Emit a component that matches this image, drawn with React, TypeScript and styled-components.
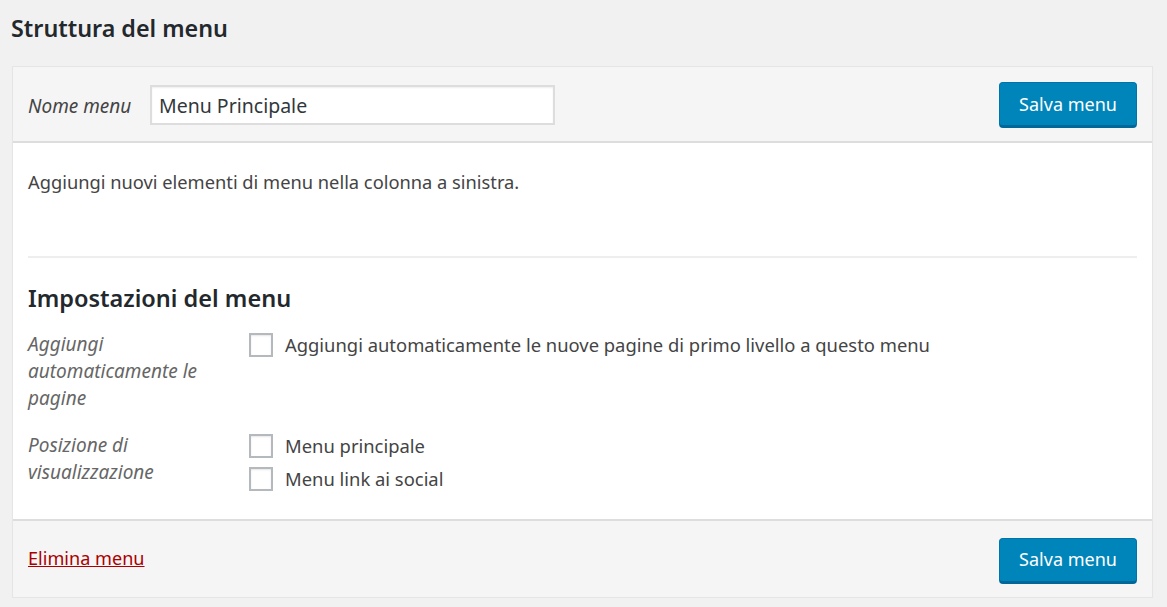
import React from "react";
import styled, { createGlobalStyle } from "styled-components";

const Global = createGlobalStyle`
  html, body { margin: 0; padding: 0; background: #f1f1f1; }
  body { font-family: "Noto Sans", "Open Sans", sans-serif; color: #444; }
`;

const Page = styled.div`
  padding: 12px 14px 0 12px;
  width: 1167px;
  box-sizing: border-box;
`;

const Title = styled.h2`
  margin: 0 0 0 -1px;
  font-size: 23.3px;
  line-height: 32px;
  font-weight: 600;
  color: #23282d;
`;

const Panel = styled.div`
  margin-top: 22px;
  background: #fff;
  border: 1px solid #e5e5e5;
  box-shadow: 0 1px 1px rgba(0, 0, 0, 0.04);
`;

const Bar = styled.div<{ $top?: boolean }>`
  box-sizing: border-box;
  display: flex;
  align-items: center;
  justify-content: space-between;
  background: #f5f5f5;
  padding: ${(p) => (p.$top ? "2px 15px 0" : "3px 15px 0")};
  height: ${(p) => (p.$top ? "76px" : "78px")};
  ${(p) => (p.$top ? "border-bottom: 2px solid #ddd;" : "border-top: 2px solid #ddd;")}
`;

const NameGroup = styled.div`
  display: flex;
  align-items: center;
`;

const NameLabel = styled.label`
  font-style: italic;
  font-size: 19px;
  color: #444;
  width: 122px;
  margin-top: 2px;
`;

const NameInput = styled.input`
  box-sizing: border-box;
  width: 405px;
  height: 40px;
  border: 2px solid #ddd;
  padding: 0 7px;
  font-family: inherit;
  font-size: 19.5px;
  color: #32373c;
  background: #fff;
  box-shadow: inset 0 1px 2px rgba(0, 0, 0, 0.07);
  outline: none;
`;

const Button = styled.button`
  box-sizing: border-box;
  width: 138px;
  height: 46px;
  background: #0085ba;
  border: 1px solid #0073aa;
  border-bottom: 3px solid #006799;
  border-radius: 4px;
  color: #fff;
  font-family: inherit;
  font-size: 18px;
  padding: 0 0 1px;
  cursor: pointer;
`;

const Body = styled.div`
  padding: 0 15px 10px;
`;

const Instructions = styled.p`
  margin: 0;
  padding: 26px 0 61px;
  font-size: 18.3px;
  line-height: 26px;
  border-bottom: 2px solid #eee;
`;

const SettingsTitle = styled.h3`
  margin: 0;
  padding: 25px 0 18px;
  font-size: 23.5px;
  line-height: 30px;
  font-weight: 600;
  color: #23282d;
`;

const Setting = styled.div`
  display: flex;
  padding-bottom: 19px;
  & + & {
    padding-bottom: 17px;
  }
  &:first-of-type {
    padding-bottom: 20px;
  }
`;

const SettingLabel = styled.div`
  width: 200px;
  margin-right: 21px;
  font-style: italic;
  font-size: 19px;
  line-height: 27px;
  color: #666;
`;

const Options = styled.div`
  display: flex;
  flex-direction: column;
  gap: 6px;
`;

const Option = styled.label`
  display: flex;
  align-items: center;
  font-size: 18.4px;
  line-height: 27px;
  color: #444;
`;

const Box = styled.span`
  box-sizing: border-box;
  width: 24px;
  height: 24px;
  border: 2px solid #b4b9be;
  background: #fff;
  box-shadow: inset 0 1px 2px rgba(0, 0, 0, 0.1);
  margin-right: 12px;
  flex: none;
`;

const DeleteLink = styled.a`
  color: #a00;
  font-size: 18.1px;
  text-decoration: underline;
  cursor: pointer;
  margin-top: -6px;
`;

export default function App() {
  return (
    <>
      <Global />
      <Page>
        <Title>Struttura del menu</Title>
        <Panel>
          <Bar $top>
            <NameGroup>
              <NameLabel>Nome menu</NameLabel>
              <NameInput defaultValue="Menu Principale" />
            </NameGroup>
            <Button>Salva menu</Button>
          </Bar>
          <Body>
            <Instructions>Aggiungi nuovi elementi di menu nella colonna a sinistra.</Instructions>
            <SettingsTitle>Impostazioni del menu</SettingsTitle>
            <Setting>
              <SettingLabel>Aggiungi automaticamente le pagine</SettingLabel>
              <Options>
                <Option>
                  <Box />
                  Aggiungi automaticamente le nuove pagine di primo livello a questo menu
                </Option>
              </Options>
            </Setting>
            <Setting>
              <SettingLabel>Posizione di visualizzazione</SettingLabel>
              <Options>
                <Option>
                  <Box />
                  Menu principale
                </Option>
                <Option>
                  <Box />
                  Menu link ai social
                </Option>
              </Options>
            </Setting>
          </Body>
          <Bar>
            <DeleteLink>Elimina menu</DeleteLink>
            <Button>Salva menu</Button>
          </Bar>
        </Panel>
      </Page>
    </>
  );
}
